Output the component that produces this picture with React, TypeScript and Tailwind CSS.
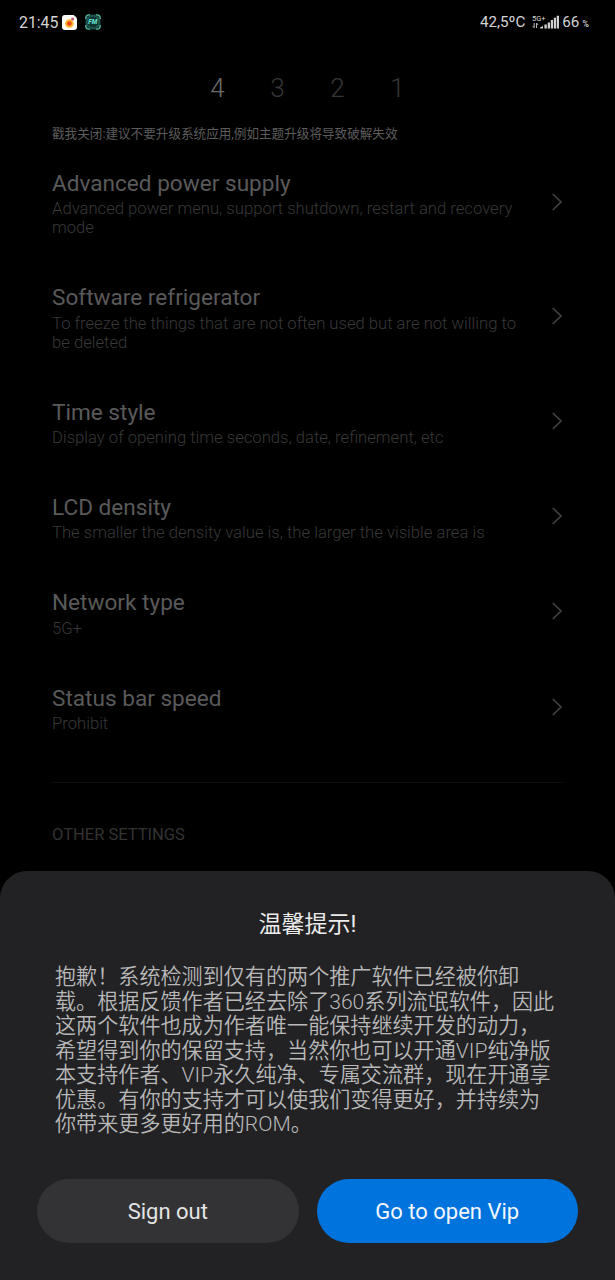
interface SettingItem {
  title: string;
  summary: string;
  tall?: boolean;
}

const settings: SettingItem[] = [
  { title: 'Advanced power supply', summary: 'Advanced power menu, support shutdown, restart and recovery mode', tall: true },
  { title: 'Software refrigerator', summary: 'To freeze the things that are not often used but are not willing to be deleted', tall: true },
  { title: 'Time style', summary: 'Display of opening time seconds, date, refinement, etc' },
  { title: 'LCD density', summary: 'The smaller the density value is, the larger the visible area is' },
  { title: 'Network type', summary: '5G+' },
  { title: 'Status bar speed', summary: 'Prohibit' },
];

const messageLines = [
  '抱歉！系统检测到仅有的两个推广软件已经被你卸',
  '载。根据反馈作者已经去除了360系列流氓软件，因此',
  '这两个软件也成为作者唯一能保持继续开发的动力，',
  '希望得到你的保留支持，当然你也可以开通VIP纯净版',
  '本支持作者、VIP永久纯净、专属交流群，现在开通享',
  '优惠。有你的支持才可以使我们变得更好，并持续为',
  '你带来更多更好用的ROM。',
];

const CameraAppIcon = () => (
  <svg className="ml-[4px] h-[15px] w-[15px]" viewBox="0 0 15 15">
    <path d="M3 0H11.5L15 3.5V12Q15 15 12 15H3Q0 15 0 12V3Q0 0 3 0Z" fill="#fff" />
    <path d="M12.6 0.6L14.4 2.6" stroke="#999" strokeWidth="1" />
    <circle cx="7.4" cy="8.5" r="4.3" fill="#fdb52b" />
    <circle cx="7.4" cy="8.5" r="2.3" fill="#e8431f" />
    <circle cx="10.6" cy="4" r="1.5" fill="#c0506e" />
  </svg>
);

const FmAppIcon = () => (
  <svg className="ml-[8px] h-[16px] w-[16px]" viewBox="0 0 16 16">
    <rect x="0.5" y="0.5" width="15" height="15" rx="4" fill="#17443f" />
    <circle cx="8" cy="8" r="6.2" fill="#123532" stroke="#276c60" strokeWidth="1" />
    <path
      d="M0.8 5V4Q0.8 0.8 4 0.8H5M11 0.8H12Q15.2 0.8 15.2 4V5M15.2 11V12Q15.2 15.2 12 15.2H11M5 15.2H4Q0.8 15.2 0.8 12V11"
      fill="none"
      stroke="#55b69d"
      strokeWidth="1.3"
    />
    <text x="7.8" y="10.2" textAnchor="middle" fontSize="6.5" fontWeight="800" fontStyle="italic" fill="#62e5cf">
      FM
    </text>
  </svg>
);

const SignalIcon = () => (
  <svg className="h-[14px] w-[28px]" viewBox="0 0 28 14">
    <text x="0" y="5.6" fontSize="7.5" textLength="13.5" lengthAdjust="spacingAndGlyphs" fill="#dcdcdc">
      5G+
    </text>
    <path d="M2.2 8V12.6M0.8 11.2L2.2 12.8M4.6 13V8.2L6 9.8" fill="none" stroke="#c4c4c4" strokeWidth="1" />
    <path
      d="M8 13.5V12.5L11 11V13.5ZM12.4 9.5H14.8V13.5H12.4ZM15.7 7.5H18V13.5H15.7ZM18.8 5H21V13.5H18.8ZM21.8 2.7H24V13.5H21.8ZM24.7 0.8H27V13.5H24.7Z"
      fill="#d0d0d0"
    />
  </svg>
);

const Chevron = () => (
  <svg className="h-[18px] w-[11px] shrink-0" viewBox="0 0 11 18" fill="none">
    <path d="M0.8 1L9 9L0.8 17" stroke="#424242" strokeWidth="1.6" />
  </svg>
);

const StatusBar = () => (
  <header className="flex h-[44px] items-center justify-between pl-[19px] pr-[26px] text-[#d4d4d4]">
    <div className="flex items-center">
      <span className="pt-px text-[15.8px] leading-5">21:45</span>
      <CameraAppIcon />
      <FmAppIcon />
    </div>
    <div className="flex items-center">
      <span className="mr-[7px] text-[15.2px] leading-5">42,5ºC</span>
      <SignalIcon />
      <span className="ml-[2px] text-[15.2px] leading-5">66</span>
      <span className="ml-[3px] mt-[4px] text-[9px] font-medium leading-3">%</span>
    </div>
  </header>
);

const SettingRow = ({ item }: { item: SettingItem }) => (
  <div className={`flex items-center justify-between ${item.tall ? 'h-[114.5px]' : 'h-[95.2px]'}`}>
    <div className="w-[475px] pt-[4.2px]">
      <div className="mb-[2.2px] text-[22.6px] leading-[27px] text-[#5a5a5a]">{item.title}</div>
      <div className="text-[16.65px] font-light leading-[19.3px] text-[#383838]">{item.summary}</div>
    </div>
    <Chevron />
  </div>
);

const NoticeSheet = () => (
  <section className="absolute inset-x-0 bottom-0 h-[409px] rounded-t-[27px] bg-[#222224] px-[37px] pt-[38px]">
    <h2 className="text-center text-[23px] leading-8 text-[#ececec]">温馨提示!</h2>
    <div className="ml-[18px] mt-[24px] whitespace-nowrap text-[21.1px] font-[350] leading-[24.5px] text-[#b8b8b9]">
      {messageLines.map((line) => (
        <p key={line}>{line}</p>
      ))}
    </div>
    <div className="mt-[42px] flex gap-[18px]">
      <button type="button" className="h-[64.5px] flex-1 rounded-full bg-[#333335] pt-[2px] text-[22px] text-[#e4e4e4]">
        Sign out
      </button>
      <button type="button" className="h-[64.5px] flex-1 rounded-full bg-[#0073dd] pt-[2px] text-[22px] text-[#f4f8fd]">
        Go to open Vip
      </button>
    </div>
  </section>
);

export default function App() {
  return (
    <div className="relative h-[1280px] w-[615px] overflow-hidden bg-black font-[Roboto,'Noto_Sans_CJK_SC',sans-serif]">
      <StatusBar />
      <main className="px-[52px]">
        <div className="flex h-[80px] justify-center pt-[28px] text-[26px] font-light leading-8 text-[#363636]">
          <span className="w-[60px] text-center text-[#6c6c6c]">4</span>
          <span className="w-[60px] text-center">3</span>
          <span className="w-[60px] text-center">2</span>
          <span className="w-[60px] text-center">1</span>
        </div>
        <p className="h-[20.5px] whitespace-nowrap text-[12.6px] leading-[19px] text-[#5c5c5c]">
          戳我关闭:建议不要升级系统应用,例如主题升级将导致破解失效
        </p>
        {settings.map((item) => (
          <SettingRow key={item.title} item={item} />
        ))}
        <div className="mt-[28px] h-px bg-[#0d0d0d]" />
        <div className="mt-[42px] text-[16.5px] leading-5 text-[#333]">OTHER SETTINGS</div>
      </main>
      <NoticeSheet />
    </div>
  );
}
